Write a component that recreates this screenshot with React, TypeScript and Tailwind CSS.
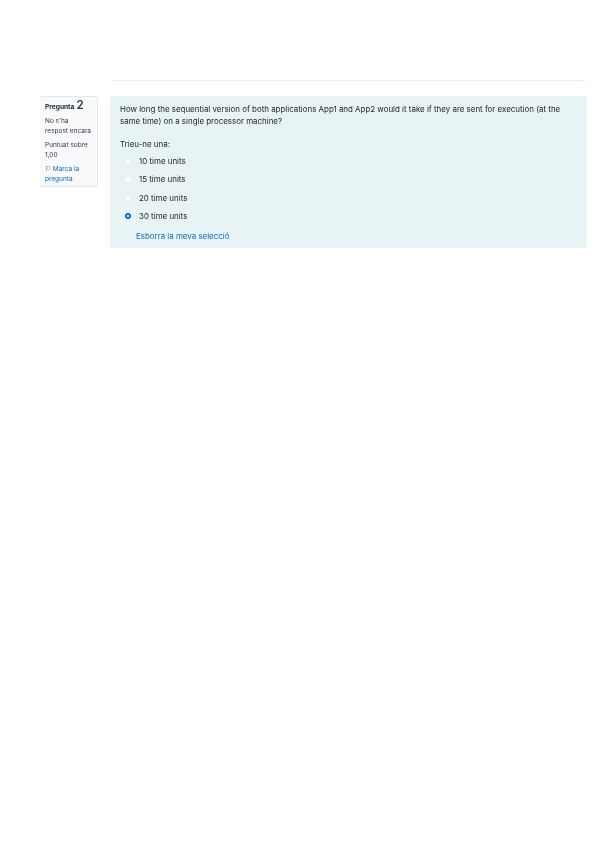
export default function App() {
  const opts = ["10 time units", "15 time units", "20 time units", "30 time units"];
  return (
    <div className="h-[848px] w-[600px] bg-white pt-20 pl-[40px] text-[#1d2125] font-['Inter',sans-serif]">
      <div className="ml-[72px] h-px w-[473px] bg-[#e6f1f4]" />
      <div className="mt-[15px] flex items-start">
        <div className="h-[91px] w-[58px] shrink-0 rounded-[2px] border-t border-r border-b border-[#e3e8ea] bg-[#f8f9fa] pl-[5px] pt-[3px]">
          <div className="flex items-baseline gap-[2px] font-bold leading-[11px] blur-[0.35px]">
            <span className="text-[6.6px]">Pregunta</span>
            <span className="text-[11.5px] font-semibold text-[#343a40]">2</span>
          </div>
          <div className="mt-[4px] text-[6.5px] leading-[9.7px] text-[#343a40] blur-[0.4px]">
            <div>No s'ha<br />respost encara</div>
            <div className="mt-[5px]">Puntuat sobre<br />1,00</div>
            <div className="mt-[4px] text-[#0f6cbf]">
              <span className="text-[#343a40]">⚐</span> Marca la<br />pregunta
            </div>
          </div>
        </div>
        <div className="ml-[12px] h-[152px] w-[477px] overflow-hidden rounded-t-[3px] bg-[#e7f3f5] pl-[10px] pt-[7px] text-[7.93px] leading-[12px] text-[#22262a]">
          <p className="w-[450px] blur-[0.4px]">How long the sequential version of both applications App1 and App2 would it take if they are sent for execution (at the same time) on a single processor machine?</p>
          <p className="mt-[11px] blur-[0.4px]">Trieu-ne una:</p>
          <div className="mt-[2px]">
            {opts.map((o, i) => (
              <div key={o} className="flex h-[18.3px] items-center">
                {i === 3 ? (
                  <span className="ml-[5px] h-[6px] w-[6px] rounded-full border-[2px] border-[#0f6cdf] bg-white" />
                ) : (
                  <span className="ml-[5px] h-[6px] w-[6px] rounded-full border border-[#f0f4f5] bg-white" />
                )}
                <span className="ml-[8px] blur-[0.4px]">{o}</span>
              </div>
            ))}
          </div>
          <div className="ml-[16px] mt-[5px] text-[#0f6cbf] blur-[0.4px]">Esborra la meva selecció</div>
        </div>
      </div>
    </div>
  );
}
